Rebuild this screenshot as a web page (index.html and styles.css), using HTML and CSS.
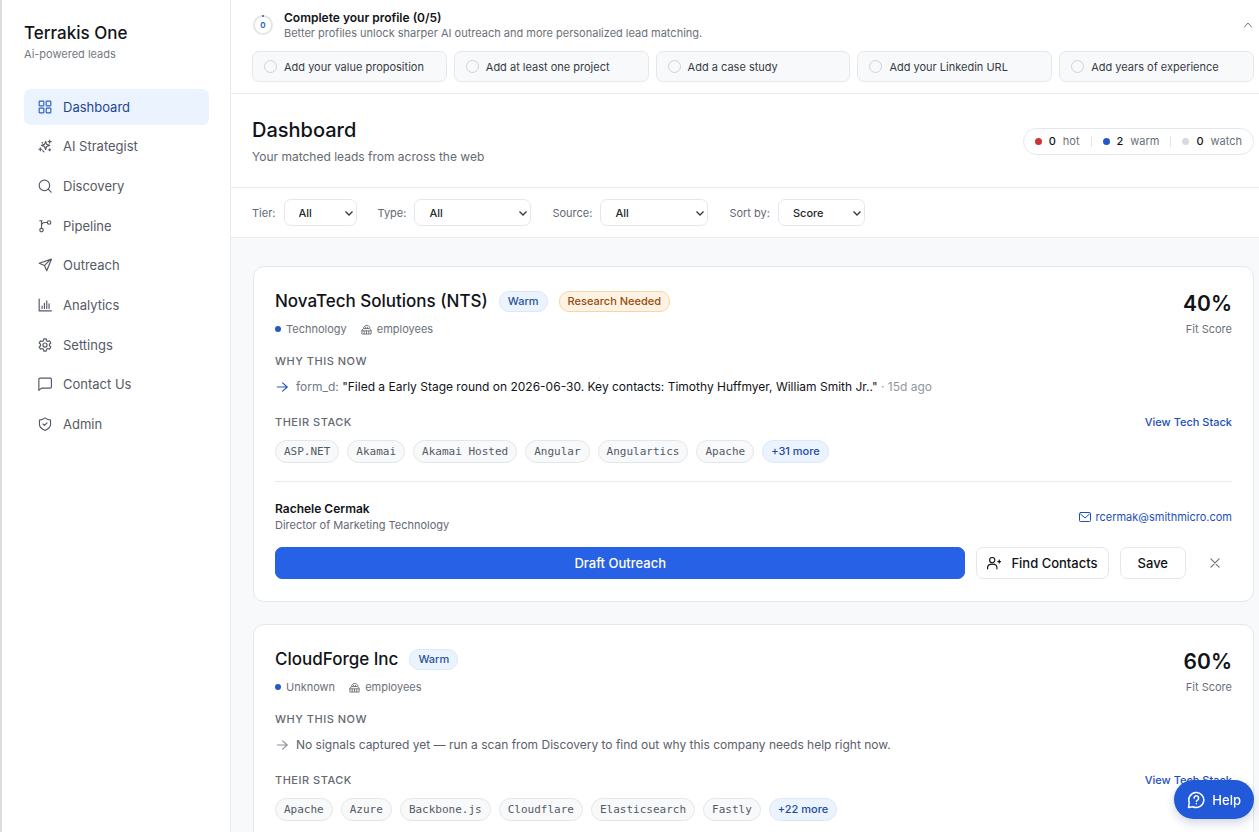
FILE: index.html
```html
<!DOCTYPE html>
<html lang="en">
<head>
    <meta charset="UTF-8">
    <meta name="viewport" content="width=device-width, initial-scale=1.0">
    <title>Terrakis One - Dashboard</title>
    <link rel="stylesheet" href="styles.css">
</head>
<body>
    <div class="app">
        <aside class="sidebar">
            <div class="brand">Terrakis One</div>
            <p class="tagline">Ai-powered leads</p>
            <nav class="nav">
                <a href="#" class="nav-link active">
                    <svg class="icon" viewBox="0 0 24 24"><rect x="2" y="2" width="8" height="8" rx="1"/><rect x="14" y="2" width="8" height="8" rx="1"/><rect x="14" y="14" width="8" height="8" rx="1"/><rect x="2" y="14" width="8" height="8" rx="1"/></svg>
                    Dashboard
                </a>
                <a href="#" class="nav-link">
                    <svg class="icon" viewBox="0 0 24 24"><path d="M13 4l1.800 5.200L20 11l-5.200 1.800L13 18l-1.800-5.200L6 11l5.200-1.800z"/><path d="M20 2v5M17.500 4.500h5M4 15v5M1.500 17.500h5M8 20l2 2M20 17v3M18.500 18.500h3M7 6l1 1"/></svg>
                    AI Strategist
                </a>
                <a href="#" class="nav-link">
                    <svg class="icon" viewBox="0 0 24 24"><circle cx="11" cy="11" r="9"/><path d="M22.500 22.500l-5-5"/></svg>
                    Discovery
                </a>
                <a href="#" class="nav-link">
                    <svg class="icon" viewBox="0 0 24 24"><path d="M6 3v12M3 3h4M15 6h-3a6 6 0 0 0-6 6"/><circle cx="19" cy="6" r="3"/><circle cx="6" cy="19" r="3"/></svg>
                    Pipeline
                </a>
                <a href="#" class="nav-link">
                    <svg class="icon" viewBox="0 0 24 24"><path d="M23 2L15 22l-4-9-9-4zM22 2L11 13"/></svg>
                    Outreach
                </a>
                <a href="#" class="nav-link">
                    <svg class="icon" viewBox="0 0 24 24"><path d="M2 2v20h21M7 18v-4M11 18V9M15 18V5M19 18v-8"/></svg>
                    Analytics
                </a>
                <a href="#" class="nav-link">
                    <svg class="icon" viewBox="0 0 24 24"><path d="M10 1.500h4l.700 3.200 2.200 1.300 3.100-1 2 3.500-2.400 2.200v2.600l2.400 2.200-2 3.500-3.100-1-2.200 1.300-.700 3.200h-4l-.700-3.200-2.200-1.300-3.100 1-2-3.500 2.400-2.200v-2.600L2 8.500 4 5l3.100 1 2.200-1.300z"/><circle cx="12" cy="12" r="3.500"/></svg>
                    Settings
                </a>
                <a href="#" class="nav-link">
                    <svg class="icon" viewBox="0 0 24 24"><path d="M23 4v13a2 2 0 0 1-2 2H6l-4.500 4V4a2 2 0 0 1 2-2H21a2 2 0 0 1 2 2z"/></svg>
                    Contact Us
                </a>
                <a href="#" class="nav-link">
                    <svg class="icon" viewBox="0 0 24 24"><path d="M21.500 13c0 5-3.500 7.500-9 9.800a1 1 0 0 1-1 0C6 20.500 2.500 18 2.500 13V6a1 1 0 0 1 1-1c2.500 0 5.500-1.200 7.700-3a1.200 1.200 0 0 1 1.600 0c2.200 1.800 5.200 3 7.700 3a1 1 0 0 1 1 1z"/><path d="M8.500 12l2.500 2.500 4.500-4.500"/></svg>
                    Admin
                </a>
            </nav>
        </aside>

        <main class="main">
            <section class="profile">
                <div class="profile-top">
                    <div class="ring">
                        <svg viewBox="0 0 22 22"><circle class="ring-track" cx="11" cy="11" r="9"/><circle class="ring-dot" cx="11" cy="2" r="1"/></svg>
                        <span>0</span>
                    </div>
                    <div class="profile-text">
                        <h2>Complete your profile (0/5)</h2>
                        <p>Better profiles unlock sharper AI outreach and more personalized lead matching.</p>
                    </div>
                    <button type="button" class="collapse" aria-label="Collapse">
                        <svg class="icon" viewBox="0 0 24 24"><path d="M5 16l7-8 7 8"/></svg>
                    </button>
                </div>
                <div class="tasks">
                    <button type="button" class="task"><span class="circle"></span>Add your value proposition</button>
                    <button type="button" class="task"><span class="circle"></span>Add at least one project</button>
                    <button type="button" class="task"><span class="circle"></span>Add a case study</button>
                    <button type="button" class="task"><span class="circle"></span>Add your Linkedin URL</button>
                    <button type="button" class="task"><span class="circle"></span>Add years of experience</button>
                </div>
            </section>

            <header class="header">
                <div>
                    <h1>Dashboard</h1>
                    <p>Your matched leads from across the web</p>
                </div>
                <ul class="stats">
                    <li><span class="dot hot"></span><b>0</b> hot</li>
                    <li><span class="dot warm"></span><b>2</b> warm</li>
                    <li><span class="dot watch"></span><b>0</b> watch</li>
                </ul>
            </header>

            <form class="filters">
                <div class="filter">
                    <label for="tier">Tier:</label>
                    <select id="tier" class="tier"><option>All</option></select>
                </div>
                <div class="filter">
                    <label for="type">Type:</label>
                    <select id="type" class="type"><option>All</option></select>
                </div>
                <div class="filter">
                    <label for="source">Source:</label>
                    <select id="source" class="source"><option>All</option></select>
                </div>
                <div class="filter">
                    <label for="sort">Sort by:</label>
                    <select id="sort" class="sort"><option>Score</option></select>
                </div>
            </form>

            <div class="leads">
                <article class="card">
                    <div class="card-top">
                        <div>
                            <div class="card-title">
                                <h3>NovaTech Solutions (NTS)</h3>
                                <span class="badge">Warm</span>
                                <span class="badge research">Research Needed</span>
                            </div>
                            <div class="meta">
                                <span class="dot warm"></span>
                                <span>Technology</span>
                                <svg class="icon employees" viewBox="0 0 24 24"><path d="M2 21V13l4-3V7l4-4h5l4 4v3l3 3v8zM6 10h12M7 21v-6M12 21v-6M17 21v-6M10 7v3M14 7v3M2 15h20"/></svg>
                                <span>employees</span>
                            </div>
                        </div>
                        <div class="score">
                            <strong>40%</strong>
                            <span>Fit Score</span>
                        </div>
                    </div>
                    <h4>Why this now</h4>
                    <p class="signal">
                        <svg class="icon arrow" viewBox="0 0 24 24"><path d="M4 12h17M13 5l8 7-8 7"/></svg>
                        <span>form_d: <q>Filed a Early Stage round on 2026-06-30. Key contacts: Timothy Huffmyer, William Smith Jr..</q> <span class="ago">· 15d ago</span></span>
                    </p>
                    <div class="stack-head">
                        <h4>Their stack</h4>
                        <a href="#">View Tech Stack</a>
                    </div>
                    <div class="tags">
                        <span class="tag">ASP.NET</span>
                        <span class="tag">Akamai</span>
                        <span class="tag">Akamai Hosted</span>
                        <span class="tag">Angular</span>
                        <span class="tag">Angulartics</span>
                        <span class="tag">Apache</span>
                        <button type="button" class="tag more">+31 more</button>
                    </div>
                    <div class="contact">
                        <div>
                            <div class="contact-name">Rachele Cermak</div>
                            <div class="contact-role">Director of Marketing Technology</div>
                        </div>
                        <a href="mailto:rcermak@smithmicro.com">
                            <svg class="icon" viewBox="0 0 24 24"><rect x="1" y="3" width="22" height="18" rx="2"/><path d="M3 6l9 8 9-8"/></svg>
                            rcermak@smithmicro.com
                        </a>
                    </div>
                    <div class="actions">
                        <button type="button" class="btn primary">Draft Outreach</button>
                        <button type="button" class="btn find">
                            <svg class="icon" viewBox="0 0 24 24"><circle cx="9" cy="7" r="4.500"/><path d="M1 22v-2c0-4 3-6 8-6s8 2 8 6v2M21 7v5M18.500 9.500h5"/></svg>
                            Find Contacts
                        </button>
                        <button type="button" class="btn save">Save</button>
                        <button type="button" class="dismiss" aria-label="Dismiss">
                            <svg class="icon" viewBox="0 0 24 24"><path d="M5 5l14 14M19 5L5 19"/></svg>
                        </button>
                    </div>
                </article>

                <article class="card">
                    <div class="card-top">
                        <div>
                            <div class="card-title">
                                <h3>CloudForge Inc</h3>
                                <span class="badge">Warm</span>
                            </div>
                            <div class="meta">
                                <span class="dot warm"></span>
                                <span>Unknown</span>
                                <svg class="icon employees" viewBox="0 0 24 24"><path d="M2 21V13l4-3V7l4-4h5l4 4v3l3 3v8zM6 10h12M7 21v-6M12 21v-6M17 21v-6M10 7v3M14 7v3M2 15h20"/></svg>
                                <span>employees</span>
                            </div>
                        </div>
                        <div class="score">
                            <strong>60%</strong>
                            <span>Fit Score</span>
                        </div>
                    </div>
                    <h4>Why this now</h4>
                    <p class="signal empty">
                        <svg class="icon arrow" viewBox="0 0 24 24"><path d="M4 12h17M13 5l8 7-8 7"/></svg>
                        <span>No signals captured yet — run a scan from Discovery to find out why this company needs help right now.</span>
                    </p>
                    <div class="stack-head">
                        <h4>Their stack</h4>
                        <a href="#">View Tech Stack</a>
                    </div>
                    <div class="tags">
                        <span class="tag">Apache</span>
                        <span class="tag">Azure</span>
                        <span class="tag">Backbone.js</span>
                        <span class="tag">Cloudflare</span>
                        <span class="tag">Elasticsearch</span>
                        <span class="tag">Fastly</span>
                        <button type="button" class="tag more">+22 more</button>
                    </div>
                </article>
            </div>
        </main>

        <button type="button" class="help">
            <svg class="icon" viewBox="0 0 24 24"><path d="M2 22l1-6.500A10 10 0 1 1 8 21z"/><path d="M9.500 9.500a3 3 0 1 1 4.500 2.600c-1 .600-1.500 1-1.500 2M12.500 17v.100"/></svg>
            Help
        </button>
    </div>
</body>
</html>
```
FILE: styles.css
```css
*{
    margin: 0;
    padding: 0;
    box-sizing: border-box;
}
body{
    font-family: Inter, "Liberation Sans", sans-serif;
    font-size: 13px;
    line-height: 20px;
    color: #111318;
    background-color: #fff;
}
button, select{
    font-family: inherit;
    cursor: pointer;
}
a{
    color: #1d4fb8;
    text-decoration: none;
}
ul{
    list-style: none;
}
.icon{
    width: 14px;
    height: 14px;
    flex-shrink: 0;
    fill: none;
    stroke: currentColor;
    stroke-width: 2;
    stroke-linecap: round;
    stroke-linejoin: round;
}
.app{
    display: flex;
    height: 100vh;
    overflow: hidden;
}

/* sidebar */
.sidebar{
    width: 231px;
    flex-shrink: 0;
    padding: 21px 21px 20px 22px;
    border-left: 2px solid #dcdde0;
    border-right: 1px solid #e8eaed;
}
.brand{
    font-size: 17px;
    font-weight: 500;
    line-height: 24px;
}
.tagline{
    font-size: 11px;
    line-height: 16px;
    margin-top: 1px;
    color: #747982;
}
.nav{
    display: grid;
    gap: 4px;
    min-height: 353px;
    margin-top: 27px;
}
.nav-link{
    display: flex;
    align-items: center;
    gap: 11px;
    padding: 0 14px;
    border-radius: 7px;
    color: #555a64;
}
.nav-link.active{
    background-color: #ebf3fe;
    color: #1e4696;
}
.nav-link.active .icon{
    color: #2f62c4;
}

/* main column */
.main{
    flex: 1;
    min-width: 0;
    overflow-y: auto;
    scrollbar-width: none;
    background-color: #f8f9fa;
}
.profile{
    padding: 9px 5px 11px 21px;
    background-color: #fff;
    border-bottom: 1px solid #e8eaed;
}
.profile-top{
    display: flex;
    align-items: center;
    gap: 10px;
}
.ring{
    position: relative;
    width: 22px;
    height: 22px;
}
.ring svg{
    display: block;
}
.ring-track{
    fill: none;
    stroke: #e3e5e8;
    stroke-width: 2;
}
.ring-dot{
    fill: #2358c5;
}
.ring span{
    position: absolute;
    inset: 0;
    text-align: center;
    font-size: 8px;
    font-weight: 600;
    line-height: 22px;
    color: #2358c5;
}
.profile-text{
    flex: 1;
}
.profile-text h2{
    font-size: 12px;
    font-weight: 600;
    line-height: 17px;
}
.profile-text p{
    font-size: 11px;
    line-height: 15px;
    color: #6b7079;
}
.collapse, .dismiss{
    display: flex;
    border: none;
    background: none;
    color: #6b7079;
}
.collapse .icon{
    width: 12px;
    height: 12px;
}
.tasks{
    display: grid;
    grid-template-columns: repeat(5, 1fr);
    gap: 7px;
    margin-top: 10px;
}
.task{
    display: flex;
    align-items: center;
    gap: 7px;
    height: 31px;
    padding: 0 11px;
    border: 1px solid #e5e8eb;
    border-radius: 7px;
    background-color: #f8f9fa;
    font-size: 11px;
    color: #373b43;
    white-space: nowrap;
}
.circle{
    width: 13px;
    height: 13px;
    border: 1px solid #cfd2d7;
    border-radius: 50%;
}
.header{
    display: flex;
    justify-content: space-between;
    align-items: center;
    padding: 22px 5px 20px 21px;
    background-color: #fff;
    border-bottom: 1px solid #e8eaed;
}
.header h1{
    font-size: 20px;
    font-weight: 500;
    line-height: 29px;
}
.header p{
    margin-top: 2px;
    font-size: 12px;
    color: #646973;
}
.stats{
    display: flex;
    padding: 5px 11px;
    border: 1px solid #e5e8eb;
    border-radius: 14px;
    font-size: 11px;
    line-height: 15px;
    color: #6b7079;
}
.stats li{
    display: flex;
    align-items: center;
    gap: 7px;
}
.stats li + li::before{
    content: "";
    width: 1px;
    height: 11px;
    margin: 0 4px 0 11px;
    background-color: #e3e5e8;
}
.stats b{
    font-weight: 500;
    color: #111318;
}
.dot{
    width: 7px;
    height: 7px;
    border-radius: 50%;
}
.hot{
    background-color: #d03238;
}
.warm{
    background-color: #2358c5;
}
.watch{
    background-color: #d8dadd;
}
.filters{
    display: flex;
    gap: 21px;
    padding: 11px 21px;
    background-color: #fff;
    border-bottom: 1px solid #e8eaed;
}
.filter{
    display: flex;
    align-items: center;
    gap: 8px;
    font-size: 11px;
    color: #646973;
}
.filter select{
    appearance: none;
    height: 27px;
    padding: 0 14px;
    border: 1px solid #e5e8eb;
    border-radius: 7px;
    background: #fff url("data:image/svg+xml,%3Csvg xmlns='http://www.w3.org/2000/svg' viewBox='0 0 10 10' fill='none' stroke='%2333363c'%3E%3Cpath d='M1.500 3.500L5 7l3.500-3.500' stroke-width='1.300'/%3E%3C/svg%3E") no-repeat right 2px center / 10px 10px;
    font-size: 11px;
    font-weight: 500;
    color: #24272d;
}
.filter .tier{
    width: 73px;
}
.filter .type{
    width: 117px;
}
.filter .source{
    width: 108px;
}
.filter .sort{
    width: 87px;
}

/* lead cards */
.leads{
    display: flex;
    flex-direction: column;
    gap: 22px;
    padding: 28px 5px 28px 22px;
}
.card{
    padding: 22px 21px;
    border: 1px solid #e5e8ec;
    border-radius: 11px;
    background-color: #fff;
}
.card-top{
    display: flex;
    justify-content: space-between;
    margin-bottom: 16px;
}
.card-title{
    display: flex;
    align-items: center;
    gap: 11px;
}
.card-title h3{
    font-size: 17px;
    font-weight: 500;
    line-height: 24px;
}
.badge{
    padding: 1px 8px;
    border: 1px solid #dbe8fa;
    border-radius: 10px;
    background-color: #ebf3fe;
    font-size: 11px;
    font-weight: 500;
    line-height: 17px;
    color: #2a5599;
}
.badge.research{
    border-color: #f6d5a9;
    background-color: #fef3e2;
    color: #9a4a12;
}
.meta{
    display: flex;
    align-items: center;
    gap: 5px;
    margin-top: 8px;
    font-size: 11px;
    line-height: 16px;
    color: #6b7079;
}
.meta .dot{
    width: 6px;
    height: 6px;
}
.employees{
    width: 11px;
    height: 11px;
    margin-left: 9px;
}
.score{
    display: flex;
    flex-direction: column;
    align-items: flex-end;
    padding-top: 2px;
}
.score strong{
    font-size: 21px;
    font-weight: 600;
    line-height: 26px;
}
.score span{
    margin-top: 4px;
    font-size: 11px;
    line-height: 16px;
    color: #6b7079;
}
.card h4{
    font-size: 11px;
    font-weight: 500;
    line-height: 16px;
    letter-spacing: 0.5px;
    text-transform: uppercase;
    color: #646973;
}
.signal{
    display: flex;
    align-items: center;
    gap: 7px;
    margin: 8px 0 17px;
    font-size: 12px;
    color: #747982;
}
.signal q{
    color: #111318;
    quotes: '"' '"';
}
.signal .arrow{
    color: #2358c5;
}
.signal .ago{
    color: #9296a0;
}
.signal.empty{
    color: #5b606a;
}
.signal.empty .arrow{
    color: #8c9099;
}
.stack-head{
    display: flex;
    justify-content: space-between;
    font-size: 11px;
    line-height: 16px;
}
.stack-head a{
    font-weight: 500;
}
.tags{
    display: flex;
    flex-wrap: wrap;
    gap: 8px;
    margin-top: 10px;
}
.tag{
    padding: 2px 8px;
    border: 1px solid #e3e6e9;
    border-radius: 12px;
    background-color: #f8f9fa;
    font-family: "DejaVu Sans Mono", monospace;
    font-size: 11px;
    line-height: 17px;
    color: #555a64;
}
.tag.more{
    border-color: #dbe8fa;
    background-color: #ebf3fe;
    font-family: inherit;
    font-weight: 500;
    color: #1e4da0;
}
.contact{
    display: flex;
    justify-content: space-between;
    align-items: center;
    margin-top: 18px;
    padding-top: 19px;
    border-top: 1px solid #e8eaed;
    font-size: 11px;
    line-height: 16px;
}
.contact-name{
    font-size: 12px;
    font-weight: 600;
}
.contact-role{
    color: #646973;
}
.contact a{
    display: flex;
    align-items: center;
    gap: 5px;
}
.contact .icon{
    width: 12px;
    height: 12px;
}
.actions{
    display: flex;
    align-items: center;
    gap: 11px;
    margin-top: 14px;
}
.btn{
    display: flex;
    justify-content: center;
    align-items: center;
    height: 32px;
    padding: 0 17px;
    border: 1px solid #e5e8eb;
    border-radius: 7px;
    background-color: #fff;
    font-size: 13px;
    font-weight: 500;
    color: #111318;
}
.btn.primary{
    flex: 1;
    border-color: #2761e6;
    background-color: #2761e6;
    color: #fff;
}
.btn.find{
    gap: 10px;
    padding: 0 10px;
}
.dismiss{
    justify-content: center;
    width: 35px;
}
.help{
    position: fixed;
    right: 5px;
    bottom: 13px;
    display: flex;
    align-items: center;
    gap: 7px;
    height: 39px;
    padding: 0 13px;
    border: none;
    border-radius: 20px;
    background-color: #2159d8;
    box-shadow: 0 4px 10px rgba(20, 50, 120, 0.2);
    font-size: 13px;
    font-weight: 500;
    color: #fff;
}
.help .icon{
    width: 18px;
    height: 18px;
}
```
